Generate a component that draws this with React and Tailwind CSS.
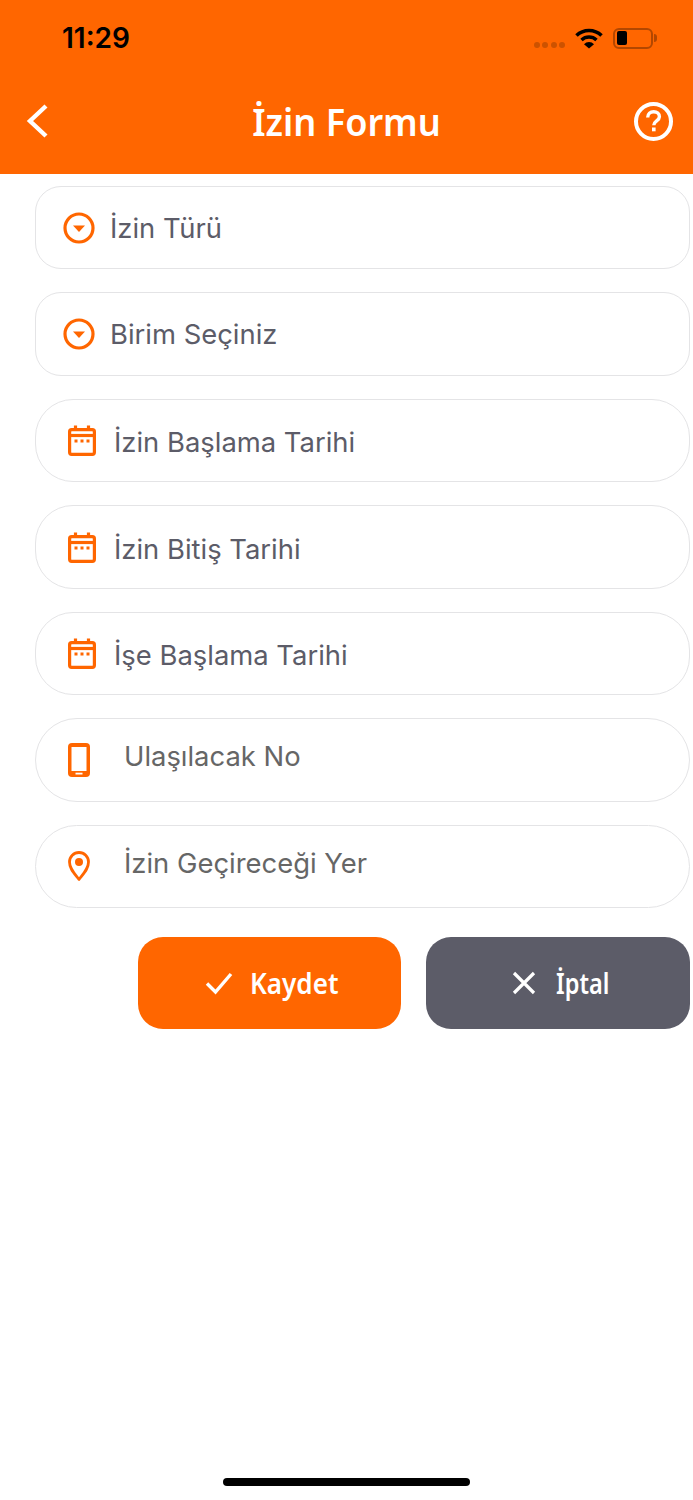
function Dropdown() {
  return (
    <svg width="32" height="32" viewBox="0 0 32 32" fill="none" className="shrink-0">
      <circle cx="16" cy="16" r="14" stroke="#ff6600" strokeWidth="3.2" />
      <path d="M10 13.5h12L16 20z" fill="#ff6600" />
    </svg>
  );
}

function Calendar() {
  return (
    <svg width="28" height="31" viewBox="0 0 28 31" fill="none" className="shrink-0">
      <rect x="1.6" y="4.7" width="24.8" height="24.6" rx="2" stroke="#ff6600" strokeWidth="3.2" />
      <path d="M1.6 10.5h24.8" stroke="#ff6600" strokeWidth="3.2" />
      <path d="M7.5 0.5v5M20.5 0.5v5" stroke="#ff6600" strokeWidth="3.2" />
      <path d="M6.5 14.5h3v3h-3zM12.5 14.5h3v3h-3zM18.5 14.5h3v3h-3z" fill="#ff6600" />
    </svg>
  );
}

function Phone() {
  return (
    <svg width="22" height="34" viewBox="0 0 22 34" fill="none" className="shrink-0">
      <rect x="0" y="0" width="22" height="34" rx="4" fill="#ff6600" />
      <rect x="3.5" y="4" width="15" height="24" fill="#fff" />
      <rect x="7.5" y="29.7" width="7" height="1.8" fill="#fff" />
    </svg>
  );
}

function Pin() {
  return (
    <svg width="22" height="31" viewBox="0 0 22 31" fill="none" className="shrink-0">
      <path d="M11 28.5C6 22 1.5 17.5 1.5 11a9.5 9.5 0 0 1 19 0c0 6.5-4.5 11-9.5 17.5z" stroke="#ff6600" strokeWidth="2.8" strokeLinejoin="round" />
      <circle cx="11" cy="11" r="4" fill="#ff6600" />
    </svg>
  );
}

function Field({ icon, label, iconBox, gap, radius, textClass, textOffset }) {
  return (
    <div className="flex h-[83.4px] items-center border border-[#e4e4e6] bg-white" style={{ borderRadius: radius }}>
      <div className={`flex justify-center ${iconBox}`}>{icon}</div>
      <span
        className={`text-[27.4px] leading-[34px] ${textClass}`}
        style={{ marginLeft: gap, transform: `translateY(${textOffset}px)`, fontFamily: "Inter, sans-serif" }}
      >
        {label}
      </span>
    </div>
  );
}

export default function App() {
  return (
    <div className="flex h-[1500px] w-[693px] flex-col overflow-hidden bg-white" style={{ fontFamily: "Inter, sans-serif" }}>
      <header className="flex h-[174px] shrink-0 flex-col bg-[#ff6600]">
        <div className="flex h-[76px] items-center justify-between pl-[62px] pr-[40px]">
          <span className="text-[28px] font-semibold leading-none text-black">11:29</span>
          <div className="flex items-center">
            <div className="mt-[14px] flex gap-[2.4px]">
              <i className="h-[6px] w-[6px] rounded-full bg-[#cc5200]" />
              <i className="h-[6px] w-[6px] rounded-full bg-[#cc5200]" />
              <i className="h-[6px] w-[6px] rounded-full bg-[#cc5200]" />
              <i className="h-[6px] w-[6px] rounded-full bg-[#cc5200]" />
            </div>
            <svg width="28" height="22" viewBox="0 0 28 22" className="ml-[10px]" fill="none">
              <path d="M1.5 8.5a18 18 0 0 1 25 0" stroke="#000" strokeWidth="3.6" />
              <path d="M6.5 13a11 11 0 0 1 15 0" stroke="#000" strokeWidth="3.4" />
              <path d="M9 17.2L14 21.5l5-4.3a7 7 0 0 0-10 0z" fill="#000" />
            </svg>
            <div className="relative ml-[10px] flex h-[21px] w-[40px] items-center rounded-[6px] border-2 border-[#b34700] pl-[2px]">
              <div className="h-[14px] w-[10px] rounded-[2px] bg-black" />
              <div className="absolute left-[39px] top-[4px] h-[8px] w-[3px] rounded-r-full bg-[#b34700]" />
            </div>
          </div>
        </div>
        <div className="relative flex h-[90px] items-center justify-between pl-[26px] pr-[20px]">
          <svg width="22" height="34" viewBox="0 0 22 34" fill="none">
            <path d="M20 2L4 17l16 15" stroke="#fff" strokeWidth="4.4" />
          </svg>
          <h1
            className="absolute left-0 right-0 text-center text-[38px] font-semibold leading-none text-white"
            style={{ fontFamily: "'Noto Sans', sans-serif", transform: "scaleX(0.95)" }}
          >
            İzin Formu
          </h1>
          <svg width="39" height="39" viewBox="0 0 39 39" fill="none">
            <circle cx="19.5" cy="19.5" r="17.5" stroke="#fff" strokeWidth="4" />
            <path d="M13.7 15.5c0-3.7 2.6-5.8 6-5.8 3.3 0 5.7 2.1 5.7 5 0 4.2-5.6 4.2-5.6 8.5" stroke="#fff" strokeWidth="3.4" />
            <rect x="18" y="25.5" width="3.6" height="3.8" fill="#fff" />
          </svg>
        </div>
      </header>

      <main className="flex flex-col gap-[23.1px] pl-[35px] pr-[3px] pt-[12px]">
        <Field icon={<Dropdown />} label="İzin Türü" iconBox="ml-[27px] w-[32px]" gap={15} radius={26} textClass="text-[#5c5c68]" textOffset={0} />
        <Field icon={<Dropdown />} label="Birim Seçiniz" iconBox="ml-[27px] w-[32px]" gap={15} radius={26} textClass="text-[#5c5c68]" textOffset={0} />
        <Field icon={<Calendar />} label="İzin Başlama Tarihi" iconBox="ml-[32px] w-[28px]" gap={18} radius={38} textClass="text-[#5c5c68]" textOffset={1} />
        <Field icon={<Calendar />} label="İzin Bitiş Tarihi" iconBox="ml-[32px] w-[28px]" gap={18} radius={38} textClass="text-[#5c5c68]" textOffset={1.5} />
        <Field icon={<Calendar />} label="İşe Başlama Tarihi" iconBox="ml-[32px] w-[28px]" gap={18} radius={38} textClass="text-[#5c5c68]" textOffset={1} />
        <Field icon={<Phone />} label="Ulaşılacak No" iconBox="ml-[32px] w-[22px]" gap={34} radius={42} textClass="text-[#666666]" textOffset={-4} />
        <Field icon={<Pin />} label="İzin Geçireceği Yer" iconBox="ml-[32px] w-[22px]" gap={34} radius={42} textClass="text-[#666666]" textOffset={-4} />
      </main>

      <div className="flex justify-end gap-[25px] pr-[3px] pt-[29px]">
        <button className="flex h-[92px] w-[263px] items-center rounded-[25px] bg-[#ff6600] pl-[67px]">
          <svg width="28" height="24" viewBox="0 0 28 24" fill="none">
            <path d="M2 12.5L10.5 21 26 3" stroke="#fff" strokeWidth="3.4" />
          </svg>
          <span className="ml-[17px] origin-left text-[28px] font-semibold text-white" style={{ fontFamily: "'Noto Sans', sans-serif", transform: "scaleX(0.93)" }}>Kaydet</span>
        </button>
        <button className="flex h-[92px] w-[264px] items-center rounded-[25px] bg-[#5c5c68] pl-[86px]">
          <svg width="24" height="24" viewBox="0 0 24 24" fill="none">
            <path d="M2 2l20 20M22 2L2 22" stroke="#fff" strokeWidth="3.2" />
          </svg>
          <span className="ml-[20px] origin-left text-[28px] font-semibold text-white" style={{ fontFamily: "'Noto Sans', sans-serif", transform: "scaleX(0.84)" }}>İptal</span>
        </button>
      </div>

      <div className="mt-auto flex justify-center pb-[14px]">
        <div className="h-[8px] w-[247px] rounded-full bg-black" />
      </div>
    </div>
  );
}
